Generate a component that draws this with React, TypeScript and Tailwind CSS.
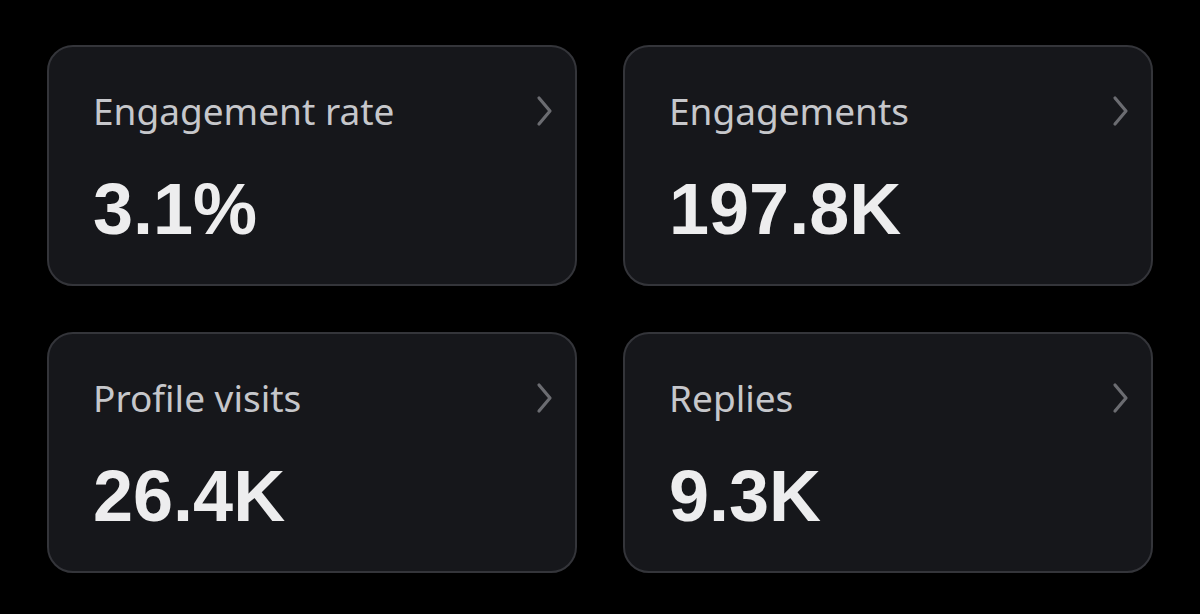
const stats = [
  { label: 'Engagement rate', value: '3.1%' },
  { label: 'Engagements', value: '197.8K' },
  { label: 'Profile visits', value: '26.4K' },
  { label: 'Replies', value: '9.3K' },
];

function Chevron() {
  return (
    <svg width="18" height="32" viewBox="0 0 18 32" fill="none" className="mt-[8px]">
      <path d="M4 3 L15 16 L4 29" stroke="#6b6c71" strokeWidth="3.2" strokeLinecap="round" strokeLinejoin="round" />
    </svg>
  );
}

export default function App() {
  return (
    <div className="w-[1200px] h-[614px] bg-black px-[47px] pt-[45px]">
      <div className="grid grid-cols-2 gap-x-[46px] gap-y-[46px]">
        {stats.map((s) => (
          <div
            key={s.label}
            className="h-[241px] rounded-[26px] border-2 border-[#34353a] bg-[#16171b] pl-[44px] pr-[22px] pt-[40px]"
          >
            <div className="flex items-start justify-between">
              <span
                className="text-[37px] leading-[48px] text-[#c6c7cb]"
                style={{ fontFamily: '"Noto Sans", sans-serif' }}
              >
                {s.label}
              </span>
              <Chevron />
            </div>
            <div
              className="mt-[34px] text-[72px] font-bold leading-[80px] text-[#ededee]"
              style={{ fontFamily: '"Liberation Sans", Arial, sans-serif' }}
            >
              {s.value}
            </div>
          </div>
        ))}
      </div>
    </div>
  );
}
